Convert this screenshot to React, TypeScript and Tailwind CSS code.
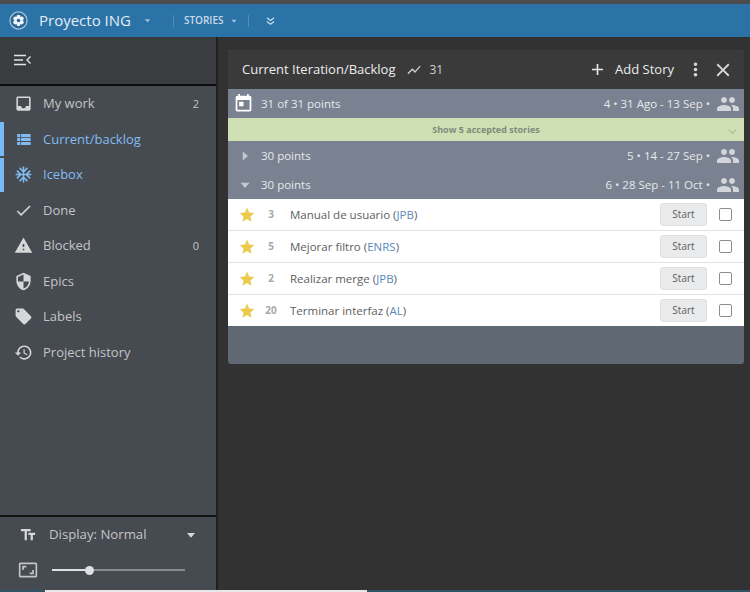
const P = {
  inbox: "M19 3H4.99c-1.11 0-1.98.89-1.98 2L3 19c0 1.1.88 2 1.99 2H19c1.1 0 2-.9 2-2V5c0-1.11-.9-2-2-2zm0 12h-4c0 1.66-1.35 3-3 3s-3-1.34-3-3H4.99V5H19v10z",
  list: "M4 14h4v-4H4v4zm0 5h4v-4H4v4zM4 9h4V5H4v4zm5 5h12v-4H9v4zm0 5h12v-4H9v4zM9 5v4h12V5H9z",
  snow: "M22 11h-4.170l3.240-3.240-1.410-1.420L15 11h-2V9l4.660-4.660-1.420-1.410L13 6.170V2h-2v4.170L7.760 2.930 6.340 4.340 11 9v2H9L4.340 6.340 2.930 7.760 6.170 11H2v2h4.170l-3.240 3.240 1.410 1.420L9 13h2v2l-4.660 4.660 1.420 1.410L11 17.830V22h2v-4.170l3.240 3.240 1.420-1.410L13 15v-2h2l4.660 4.660 1.410-1.420L17.830 13H22z",
  check: "M9 16.17L4.83 12l-1.42 1.41L9 19 21 7l-1.41-1.41z",
  warn: "M1 21h22L12 2 1 21zm12-3h-2v-2h2v2zm0-4h-2v-4h2v4z",
  shield: "M12 1L3 5v6c0 5.55 3.84 10.74 9 12 5.16-1.26 9-6.45 9-12V5l-9-4zm0 10.99h7c-.53 4.12-3.28 7.79-7 8.94V12H5V6.3l7-3.11v8.8z",
  tag: "M21.41 11.58l-9-9C12.05 2.22 11.55 2 11 2H4c-1.1 0-2 .9-2 2v7c0 .55.22 1.05.59 1.42l9 9c.36.36.86.58 1.41.58.55 0 1.05-.22 1.41-.59l7-7c.37-.36.59-.86.59-1.41 0-.55-.23-1.06-.59-1.42zM5.5 7C4.67 7 4 6.33 4 5.5S4.67 4 5.5 4 7 4.67 7 5.5 6.33 7 5.5 7z",
  history: "M13 3c-4.97 0-9 4.03-9 9H1l3.89 3.89.07.14L9 12H6c0-3.87 3.13-7 7-7s7 3.13 7 7-3.13 7-7 7c-1.93 0-3.68-.79-4.94-2.06l-1.42 1.42C8.27 19.99 10.51 21 13 21c4.97 0 9-4.03 9-9s-4.03-9-9-9zm-1 5v5l4.28 2.54.72-1.21-3.5-2.08V8H12z",
  text: "M2.5 4v3h5v12h3V7h5V4h-13zm19 5h-9v3h3v7h3v-7h3V9z",
  aspect: "M19 12h-2v3h-3v2h5v-5zM7 9h3V7H5v5h2V9zm14-6H3c-1.1 0-2 .9-2 2v14c0 1.1.9 2 2 2h18c1.1 0 2-.9 2-2V5c0-1.1-.9-2-2-2zm0 16.01H3V4.99h18v14.02z",
  star: "M12 17.27L18.18 21l-1.64-7.03L22 9.24l-7.19-.61L12 2 9.19 8.63 2 9.24l5.46 4.73L5.82 21z",
  people: "M16 11c1.66 0 2.99-1.34 2.99-3S17.66 5 16 5c-1.66 0-3 1.34-3 3s1.34 3 3 3zm-8 0c1.66 0 2.99-1.34 2.99-3S9.66 5 8 5C6.34 5 5 6.34 5 8s1.34 3 3 3zm0 2c-2.33 0-7 1.17-7 3.5V19h14v-2.5c0-2.33-4.67-3.5-7-3.5zm8 0c-.29 0-.62.02-.97.05 1.16.84 1.97 1.97 1.97 3.45V19h6v-2.5c0-2.33-4.67-3.5-7-3.5z",
  today: "M19 3h-1V1h-2v2H8V1H6v2H5c-1.11 0-1.99.9-1.99 2L3 19c0 1.1.89 2 2 2h14c1.1 0 2-.9 2-2V5c0-1.1-.9-2-2-2zm0 16H5V8h14v11zM7 10h5v5H7z",
  chart: "M3.5 18.49l6-6.01 4 4L22 6.92l-1.41-1.41-7.09 7.97-4-4L2 16.99z",
  add: "M19 13h-6v6h-2v-6H5v-2h6V5h2v6h6v2z",
  close: "M19 6.41L17.59 5 12 10.59 6.41 5 5 6.41 10.59 12 5 17.59 6.41 19 12 13.41 17.59 19 19 17.59 13.41 12z",
  more: "M12 8c1.1 0 2-.9 2-2s-.9-2-2-2-2 .9-2 2 .9 2 2 2zm0 2c-1.1 0-2 .9-2 2s.9 2 2 2 2-.9 2-2-.9-2-2-2zm0 6c-1.1 0-2 .9-2 2s.9 2 2 2 2-.9 2-2-.9-2-2-2z",
  right: "M9 6l7 6-7 6z",
  down: "M6 9l6 7 6-7z",
};

function I({ d, className }: { d: string; className: string }) {
  return (
    <svg viewBox="0 0 24 24" fill="currentColor" className={className}>
      <path d={d} />
    </svg>
  );
}

const nav = [
  { icon: P.inbox, label: "My work", count: "2" },
  { icon: P.list, label: "Current/backlog", active: true },
  { icon: P.snow, label: "Icebox", active: true },
  { icon: P.check, label: "Done" },
  { icon: P.warn, label: "Blocked", count: "0" },
  { icon: P.shield, label: "Epics" },
  { icon: P.tag, label: "Labels" },
  { icon: P.history, label: "Project history" },
];

const stories = [
  { pts: "3", name: "Manual de usuario", owner: "JPB" },
  { pts: "5", name: "Mejorar filtro", owner: "ENRS" },
  { pts: "2", name: "Realizar merge", owner: "JPB" },
  { pts: "20", name: "Terminar interfaz", owner: "AL" },
];

function IterRow({ open, pts, info }: { open: boolean; pts: string; info: string }) {
  return (
    <div className="h-[29px] flex items-center bg-[#7a8291] text-[#e6e8ea]">
      <span className="w-[33px] flex justify-center">
        <I d={open ? P.down : P.right} className="w-[18px] h-[18px] text-[#c3c7ce]" />
      </span>
      <span className="text-[11.5px]">{pts}</span>
      <span className="ml-auto text-[11.5px]">{info}</span>
      <I d={P.people} className="w-[24px] h-[24px] ml-[6px] mr-[4px] text-[#d2d5da]" />
    </div>
  );
}

export default function App() {
  return (
    <div className="w-[750px] h-[592px] flex flex-col overflow-hidden bg-[#323232] font-['Open_Sans',sans-serif]">
      <div className="h-[4px] bg-[#4d4d4d]" />
      <header className="h-[33px] flex items-center bg-[#2b72a6] text-[#e4edf4]">
        <svg viewBox="0 0 20 20" className="ml-[9px] w-[19px] h-[19px]">
          <circle cx="10" cy="10" r="9" fill="#2a6797" stroke="#a9c8de" strokeWidth="1.3" />
          <g fill="#f2f6f9">
            <circle cx="10" cy="6.200" r="2.200" />
            <circle cx="13.300" cy="8.100" r="2.200" />
            <circle cx="13.300" cy="11.900" r="2.200" />
            <circle cx="10" cy="13.800" r="2.200" />
            <circle cx="6.700" cy="11.900" r="2.200" />
            <circle cx="6.700" cy="8.100" r="2.200" />
          </g>
          <circle cx="10" cy="10" r="1" fill="#2a6797" />
        </svg>
        <span className="ml-[11px] text-[15px] leading-none">Proyecto ING</span>
        <I d={P.down} className="ml-[11px] w-[11px] h-[11px] text-[#a6c6dd]" />
        <div className="ml-[20px] w-px h-[12px] bg-[#4f8cb8]" />
        <span className="ml-[10px] text-[10px] font-semibold text-[#c9dcea]">STORIES</span>
        <I d={P.down} className="ml-[5px] w-[10px] h-[10px] text-[#a6c6dd]" />
        <div className="ml-[9px] w-px h-[12px] bg-[#4f8cb8]" />
        <svg viewBox="0 0 10 10" fill="none" stroke="#c9dcea" strokeWidth="1.4" className="ml-[17px] w-[9px] h-[10px]">
          <path d="M1 1.5l4 3 4-3M1 5.5l4 3 4-3" />
        </svg>
      </header>
      <div className="flex-1 flex min-h-0">
        <aside className="w-[218px] flex flex-col bg-[#464a51] border-r-[2px] border-[#1f1f1f]">
          <div className="h-[49px] flex items-center pl-[14px] pb-[2px] bg-[#3b3c3f] border-b-[2px] border-[#0c0c0c]">
            <svg viewBox="0 0 17 12" fill="none" stroke="#e2e2e2" strokeWidth="1.4" className="w-[17px] h-[12px]">
              <path d="M0 1.5h12M0 6h9M0 10.5h12M16.5 2.5L13 6l3.500 3.500" />
            </svg>
          </div>
          <nav className="flex-1">
            {nav.map((n) => (
              <div
                key={n.label}
                className={`h-[35.5px] flex items-center ${n.active ? "text-[#82bcf0]" : "text-[#c4c5c6]"}`}
              >
                <div className={`w-[4px] h-[34px] ${n.active ? "bg-[#78baf3]" : ""}`} />
                <I d={n.icon} className={`ml-[10px] w-[19px] h-[19px] ${n.active ? "" : "text-[#d6d7d8]"}`} />
                <span className="ml-[10px] text-[13px]">{n.label}</span>
                {n.count && <span className="ml-auto mr-[17px] text-[11px]">{n.count}</span>}
              </div>
            ))}
          </nav>
          <div className="h-[75px] border-t-[2px] border-[#121212] text-[#c4c5c6]">
            <div className="h-[36px] flex items-center">
              <I d={P.text} className="ml-[19px] w-[18px] h-[18px] text-[#d6d7d8]" />
              <span className="ml-[12px] text-[13.2px]">Display: Normal</span>
              <I d={P.down} className="ml-auto mr-[17px] w-[16px] h-[16px] text-[#d6d7d8]" />
            </div>
            <div className="mt-[7px] flex items-center">
              <I d={P.aspect} className="ml-[18px] w-[20px] h-[20px]" />
              <div className="ml-[14px] w-[133px] h-[2px] bg-[#878b91] flex items-center">
                <div className="w-[37px] h-[2px] bg-[#dfe0e2]" />
                <div className="w-[9px] h-[9px] rounded-full bg-[#dfe0e2] -ml-[4px]" />
              </div>
            </div>
          </div>
        </aside>
        <main className="flex-1 pt-[13px] pl-[10px]">
          <div className="w-[516px] rounded-[3px] overflow-hidden bg-[#5f6873]">
            <div className="h-[39px] flex items-center bg-[#3a3a3b] text-[#ececec]">
              <span className="ml-[14px] text-[13px]">Current Iteration/Backlog</span>
              <I d={P.chart} className="ml-[10px] w-[16px] h-[16px] text-[#cfcfcf]" />
              <span className="ml-[8px] text-[12px] text-[#cfcfcf]">31</span>
              <I d={P.add} className="ml-auto w-[19px] h-[19px]" />
              <span className="ml-[8px] text-[13px]">Add Story</span>
              <I d={P.more} className="ml-[11px] w-[21px] h-[21px] text-[#d9d9d9]" />
              <I d={P.close} className="ml-[6px] mr-[10px] w-[22px] h-[22px] text-[#d9d9d9]" />
            </div>
            <div className="h-[29px] flex items-center bg-[#7a8291] text-[#e6e8ea]">
              <I d={P.today} className="ml-[5px] w-[21px] h-[21px] text-white" />
              <span className="ml-[7px] text-[11.5px]">31 of 31 points</span>
              <span className="ml-auto text-[11.5px]">4 • 31 Ago - 13 Sep •</span>
              <I d={P.people} className="w-[24px] h-[24px] ml-[6px] mr-[4px] text-[#d2d5da]" />
            </div>
            <div className="h-[23px] flex items-center justify-center relative bg-[#cfe0b4] text-[#808a7a] text-[9px] font-bold">
              Show 5 accepted stories
              <svg viewBox="0 0 10 10" fill="none" stroke="#b3c59a" strokeWidth="1.5" className="absolute right-[7px] top-[9px] w-[9px] h-[9px]">
                <path d="M1 3l4 4 4-4" />
              </svg>
            </div>
            <IterRow open={false} pts="30 points" info="5 • 14 - 27 Sep •" />
            <IterRow open pts="30 points" info="6 • 28 Sep - 11 Oct •" />
            <div className="bg-white">
              {stories.map((s) => (
                <div key={s.name} className="h-[32px] flex items-center border-b border-[#e4e4e4] last:border-b-0 last:h-[31px]">
                  <I d={P.star} className="ml-[10px] w-[18px] h-[18px] text-[#ecc94f]" />
                  <span className="w-[24px] ml-[3px] text-center text-[10px] font-bold text-[#a8a8a8]">{s.pts}</span>
                  <span className="ml-[7px] text-[11.5px] text-[#5e5e5e]">
                    {s.name} (<span className="text-[#5b88bd]">{s.owner}</span>)
                  </span>
                  <span className="ml-auto w-[47px] h-[23px] flex items-center justify-center rounded-[3px] bg-[#e9eaec] border border-[#dfe0e2] text-[10px] text-[#5f5f5f]">
                    Start
                  </span>
                  <span className="ml-[12px] mr-[12px] w-[13px] h-[13px] rounded-[2px] bg-white border border-[#8e8e8e]" />
                </div>
              ))}
            </div>
            <div className="h-[38px]" />
          </div>
        </main>
      </div>
      <div className="h-[2px] flex bg-[#2f5566]">
        <div className="ml-[45px] w-[322px] bg-[#e8e8e8]" />
      </div>
    </div>
  );
}
